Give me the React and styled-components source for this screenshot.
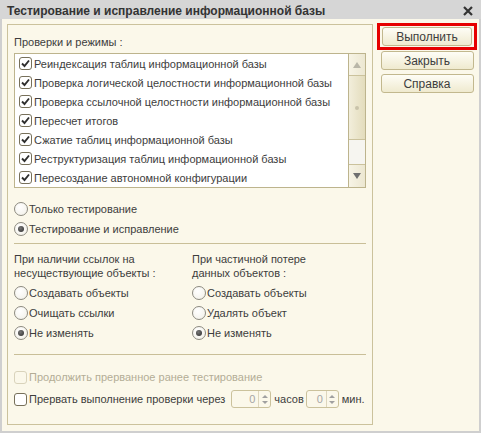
import React from "react";
import styled, { createGlobalStyle } from "styled-components";

const GlobalStyle = createGlobalStyle`
  html, body {
    margin: 0;
    padding: 0;
    background: #fbf8ea;
  }
  body {
    font-family: "Liberation Sans", Arial, sans-serif;
    font-size: 11px;
    color: #3d3d3d;
  }
`;

const checks = [
  "Реиндексация таблиц информационной базы",
  "Проверка логической целостности информационной базы",
  "Проверка ссылочной целостности информационной базы",
  "Пересчет итогов",
  "Сжатие таблиц информационной базы",
  "Реструктуризация таблиц информационной базы",
  "Пересоздание автономной конфигурации",
];

function App() {
  return (
    <>
      <GlobalStyle />
      <Window>
        <TitleBar>
          <Title>Тестирование и исправление информационной базы</Title>
          <CloseIcon width="10" height="10" viewBox="0 0 10 10">
            <path d="M1 1 L9 9 M9 1 L1 9" stroke="#333" strokeWidth="2.2" />
          </CloseIcon>
        </TitleBar>
        <Body>
          <Panel>
            <Label>Проверки и режимы :</Label>
            <ListBox>
              <Rows>
                {checks.map((c) => (
                  <ListRow key={c}>
                    <CheckBox checked />
                    <span>{c}</span>
                  </ListRow>
                ))}
              </Rows>
              <ScrollBar>
                <ScrollBtn $h={21}>
                  <Arrow $up $color="#b9b6a8" />
                </ScrollBtn>
                <Thumb>
                  <Grip />
                </Thumb>
                <Track />
                <ScrollBtn $h={22}>
                  <Arrow $color="#6f6f6f" />
                </ScrollBtn>
              </ScrollBar>
            </ListBox>

            <RadioGroup>
              <Option>
                <Radio />
                <span>Только тестирование</span>
              </Option>
              <Option>
                <Radio selected />
                <span>Тестирование и исправление</span>
              </Option>
            </RadioGroup>

            <Separator />

            <Columns>
              <Column>
                <ColumnLabel>
                  При наличии ссылок на
                  <br />
                  несуществующие объекты :
                </ColumnLabel>
                <Option>
                  <Radio />
                  <span>Создавать объекты</span>
                </Option>
                <Option>
                  <Radio />
                  <span>Очищать ссылки</span>
                </Option>
                <Option>
                  <Radio selected />
                  <span>Не изменять</span>
                </Option>
              </Column>
              <Column>
                <ColumnLabel>
                  При частичной потере
                  <br />
                  данных объектов :
                </ColumnLabel>
                <Option>
                  <Radio />
                  <span>Создавать объекты</span>
                </Option>
                <Option>
                  <Radio />
                  <span>Удалять объект</span>
                </Option>
                <Option>
                  <Radio selected />
                  <span>Не изменять</span>
                </Option>
              </Column>
            </Columns>

            <Separator $gap={11} />

            <BottomRow $disabled>
              <CheckBox disabled />
              <span>Продолжить прерванное ранее тестирование</span>
            </BottomRow>
            <BottomRow>
              <CheckBox />
              <span>Прервать выполнение проверки через</span>
              <Spin value="0" width={40} />
              <span>часов</span>
              <Spin value="0" width={33} />
              <span>мин.</span>
            </BottomRow>
          </Panel>

          <Buttons>
            <DefaultFrame>
              <Button>Выполнить</Button>
            </DefaultFrame>
            <Button $wide>Закрыть</Button>
            <Button $wide>Справка</Button>
          </Buttons>
        </Body>
      </Window>
    </>
  );
}

function CheckBox({ checked, disabled }) {
  return (
    <Box $disabled={disabled}>
      {checked && (
        <svg width="11" height="11" viewBox="0 0 11 11">
          <path
            d="M2 5.5 L4.5 8 L9 2.5"
            fill="none"
            stroke="#2e2e2e"
            strokeWidth="1.9"
          />
        </svg>
      )}
    </Box>
  );
}

function Radio({ selected }) {
  return <Circle>{selected && <Dot />}</Circle>;
}

function Spin({ value, width }) {
  return (
    <SpinBox style={{ width }}>
      <SpinValue>{value}</SpinValue>
      <SpinArrows>
        <Arrow $up $small $color="#a0a0a0" />
        <Arrow $small $color="#a0a0a0" />
      </SpinArrows>
    </SpinBox>
  );
}

export default App;

const Window = styled.div`
  width: 481px;
  height: 433px;
  box-sizing: border-box;
  border: 2px solid #cfcfcf;
  border-top: none;
  display: flex;
  flex-direction: column;
  background: #fbf8ea;
`;

const TitleBar = styled.div`
  height: 19px;
  margin: 0 -2px;
  padding: 0 8px 0 7px;
  background: #d6d6d6;
  display: flex;
  align-items: center;
  justify-content: space-between;
`;

const Title = styled.div`
  font-weight: bold;
  font-size: 12px;
  color: #333;
  margin-top: 2px;
`;

const CloseIcon = styled.svg`
  margin-top: 2px;
`;

const Body = styled.div`
  display: flex;
  align-items: flex-start;
  padding: 4px 0 0 5px;
  gap: 4px;
`;

const Panel = styled.div`
  width: 366px;
  height: 401px;
  box-sizing: border-box;
  border: 1px solid #cbc29c;
  padding: 10px 6px 0 6px;
  display: flex;
  flex-direction: column;
  margin-top: 1px;
`;

const Label = styled.div`
  height: 15px;
  line-height: 15px;
  margin-bottom: 3px;
`;

const ListBox = styled.div`
  display: flex;
  height: 135px;
  box-sizing: border-box;
  border: 1px solid #bdb48d;
  background: #fff;
`;

const Rows = styled.div`
  flex: 1;
  display: flex;
  flex-direction: column;
`;

const ListRow = styled.div`
  height: 19px;
  display: flex;
  align-items: center;
  padding-left: 4px;
  gap: 2px;
  white-space: nowrap;
`;

const Box = styled.span`
  width: 13px;
  height: 13px;
  box-sizing: border-box;
  border: 1px solid ${(p) => (p.$disabled ? "#d9d3bb" : "#77705a")};
  border-radius: 3px;
  background: ${(p) => (p.$disabled ? "#fbf8ea" : "#fff")};
  display: flex;
  align-items: center;
  justify-content: center;
  flex-shrink: 0;
`;

const ScrollBar = styled.div`
  width: 16px;
  border-left: 1px solid #bdb48d;
  display: flex;
  flex-direction: column;
`;

const ScrollBtn = styled.div`
  height: ${(p) => p.$h}px;
  background: linear-gradient(to right, #f7f4e6, #ece7d1);
  border-bottom: 1px solid #cbc29c;
  display: flex;
  align-items: center;
  justify-content: center;
  &:last-child {
    border-bottom: none;
    border-top: 1px solid #cbc29c;
  }
`;

const Thumb = styled.div`
  height: 63px;
  background: linear-gradient(to right, #f2eedb, #e3dcbc);
  border-bottom: 1px solid #cbc29c;
  display: flex;
  align-items: center;
  justify-content: center;
`;

const Grip = styled.span`
  width: 4px;
  height: 4px;
  border-radius: 50%;
  background: #c9c3aa;
`;

const Track = styled.div`
  flex: 1;
  background: #f6f5f0;
`;

const Arrow = styled.span`
  width: 0;
  height: 0;
  border-left: ${(p) => (p.$small ? 3 : 4)}px solid transparent;
  border-right: ${(p) => (p.$small ? 3 : 4)}px solid transparent;
  ${(p) =>
    p.$up
      ? `border-bottom: ${p.$small ? 3 : 6}px solid ${p.$color};`
      : `border-top: ${p.$small ? 3 : 6}px solid ${p.$color};`}
`;

const RadioGroup = styled.div`
  display: flex;
  flex-direction: column;
  margin-top: 11px;
`;

const Option = styled.div`
  height: 20px;
  display: flex;
  align-items: center;
  gap: 1px;
  white-space: nowrap;
`;

const Circle = styled.span`
  width: 14px;
  height: 14px;
  box-sizing: border-box;
  border: 1px solid #8c8a80;
  border-radius: 50%;
  background: radial-gradient(circle at 40% 35%, #ffffff, #f1efe6);
  display: flex;
  align-items: center;
  justify-content: center;
  flex-shrink: 0;
`;

const Dot = styled.span`
  width: 6px;
  height: 6px;
  border-radius: 50%;
  background: radial-gradient(circle at 40% 35%, #777, #2a2a2a);
`;

const Separator = styled.div`
  height: 1px;
  background: #c9bf98;
  margin-top: ${(p) => p.$gap ?? 4}px;
  margin-bottom: ${(p) => p.$gap ?? 8}px;
`;

const Columns = styled.div`
  display: grid;
  grid-template-columns: 178px 1fr;
`;

const Column = styled.div`
  display: flex;
  flex-direction: column;
`;

const ColumnLabel = styled.div`
  line-height: 14px;
  margin-bottom: 3px;
`;

const BottomRow = styled.div`
  height: 22px;
  display: flex;
  align-items: center;
  gap: 2px;
  white-space: nowrap;
  color: ${(p) => (p.$disabled ? "#b3ad96" : "inherit")};
  & > span:nth-child(2) {
    margin-right: 4px;
  }
`;

const SpinBox = styled.div`
  height: 18px;
  box-sizing: border-box;
  border: 1px solid #cbc29c;
  border-radius: 3px;
  background: #fbf8ea;
  display: flex;
  margin: 0 1px 0 0;
`;

const SpinValue = styled.div`
  flex: 1;
  text-align: right;
  padding-right: 3px;
  line-height: 16px;
  color: #a6a6a6;
`;

const SpinArrows = styled.div`
  width: 11px;
  border-left: 1px solid #ddd6bd;
  display: flex;
  flex-direction: column;
  align-items: center;
  justify-content: center;
  gap: 3px;
`;

const Buttons = styled.div`
  width: 100px;
  display: flex;
  flex-direction: column;
  align-items: center;
  gap: 4px;
`;

const DefaultFrame = styled.div`
  width: 100px;
  box-sizing: border-box;
  border: 3px solid #e60000;
  padding: 1px 2px;
  margin-bottom: -3px;
`;

const Button = styled.button`
  width: ${(p) => (p.$wide ? "93px" : "100%")};
  height: 19px;
  box-sizing: border-box;
  border: 1px solid #c2b88e;
  border-radius: 3px;
  background: linear-gradient(to bottom, #fefdf6, #efeacf);
  font-family: "Liberation Sans", Arial, sans-serif;
  font-size: 12px;
  color: #3d3d3d;
  padding: 0;
  cursor: pointer;
`;
